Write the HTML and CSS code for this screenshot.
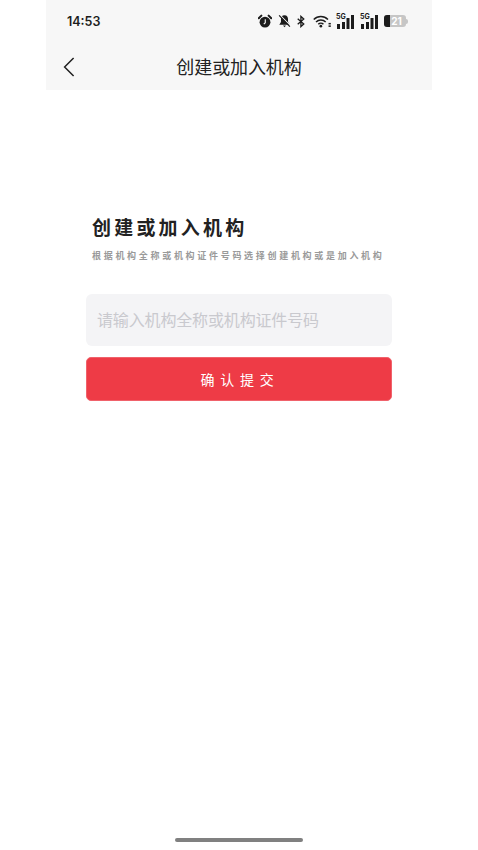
FILE: index.html
```html
<!DOCTYPE html>
<html lang="zh-CN">
<head>
    <meta charset="UTF-8">
    <meta name="viewport" content="width=device-width, initial-scale=1.0">
    <title>创建或加入机构</title>
    <link rel="stylesheet" href="styles.css">
</head>
<body>
    <div class="screen">
        <!-- Status bar + nav -->
        <header class="top">
            <div class="status-bar">
                <span class="time">14:53</span>
                <div class="status-icons">
                    <svg class="ic" width="14" height="15" viewBox="0 0 15 15">
                        <circle cx="7.5" cy="8.2" r="5.8" fill="#1c1c1c"/>
                        <path d="M0.8 4 L3.6 1.2 M14.2 4 L11.4 1.2" stroke="#1c1c1c" stroke-width="2.2" stroke-linecap="round"/>
                        <path d="M7.8 5 V8.8 L6.2 10.4" stroke="#f7f7f7" stroke-width="1.2" fill="none"/>
                    </svg>
                    <svg class="ic" width="13" height="14" viewBox="0 0 14 14">
                        <path d="M7 0.8 C4.2 0.8 3.2 3 3.2 5 V8 L1.4 11 H12.6 L10.8 8 V5 C10.8 3 9.8 0.8 7 0.8 Z" fill="#1c1c1c"/>
                        <path d="M5.4 11.8 H8.6 L7 13.6 Z" fill="#1c1c1c"/>
                        <path d="M2.2 0.6 L13.4 12" stroke="#f7f7f7" stroke-width="1.2"/>
                        <path d="M1.2 1 L12.8 13" stroke="#1c1c1c" stroke-width="1.3"/>
                    </svg>
                    <svg class="ic bt" width="8" height="13" viewBox="0 0 9 13">
                        <path d="M0.8 3.4 L7.6 9.2 L4.4 12.2 V0.8 L7.6 3.8 L0.8 9.6" stroke="#1c1c1c" stroke-width="1.5" fill="none"/>
                    </svg>
                    <svg class="ic wifi" width="18" height="13" viewBox="0 0 19 13">
                        <path d="M0.8 4.4 C5 0.2 11.6 0.2 15.8 4.4" stroke="#1c1c1c" stroke-width="1.6" fill="none"/>
                        <path d="M3.2 7 C6 4.2 10.6 4.2 13.4 7" stroke="#1c1c1c" stroke-width="1.6" fill="none"/>
                        <path d="M5.6 9.4 C7 8 9.6 8 11 9.4" stroke="#1c1c1c" stroke-width="1.6" fill="none"/>
                        <circle cx="8.3" cy="11.4" r="1.4" fill="#1c1c1c"/>
                        <rect x="16.4" y="8" width="2.4" height="1.6" fill="#1c1c1c"/>
                        <rect x="16.4" y="10.6" width="2.4" height="1.6" fill="#1c1c1c"/>
                    </svg>
                    <div class="signal">
                        <span class="sig-label">5G</span>
                        <svg width="18" height="14" viewBox="0 0 18 14">
                            <rect x="1" y="9" width="3" height="5" fill="#1c1c1c"/>
                            <rect x="6" y="7" width="3" height="7" fill="#1c1c1c"/>
                            <rect x="10.500" y="3" width="3" height="11" fill="#1c1c1c"/>
                            <rect x="15" y="0" width="3" height="14" fill="#1c1c1c"/>
                        </svg>
                    </div>
                    <div class="signal">
                        <span class="sig-label">5G</span>
                        <svg width="18" height="14" viewBox="0 0 18 14">
                            <rect x="1" y="9" width="3" height="5" fill="#1c1c1c"/>
                            <rect x="6" y="7" width="3" height="7" fill="#1c1c1c"/>
                            <rect x="10.500" y="3" width="3" height="11" fill="#1c1c1c"/>
                            <rect x="15" y="0" width="3" height="14" fill="#1c1c1c"/>
                        </svg>
                    </div>
                    <div class="battery">
                        <div class="battery-body">
                            <div class="battery-fill"></div>
                            <span class="battery-num">21</span>
                        </div>
                        <div class="battery-nub"></div>
                    </div>
                </div>
            </div>
            <nav class="navbar">
                <svg class="back" width="12" height="20" viewBox="0 0 12 20">
                    <path d="M10.6 1 L1.6 10 L10.6 19" stroke="#222" stroke-width="1.5" fill="none"/>
                </svg>
                <h1>创建或加入机构</h1>
            </nav>
        </header>

        <main class="content">
            <h2>创建或加入机构</h2>
            <p class="hint">根据机构全称或机构证件号码选择创建机构或是加入机构</p>
            <input class="org-input" type="text" placeholder="请输入机构全称或机构证件号码">
            <button class="submit-btn">确认提交</button>
        </main>

        <div class="home-bar"></div>
    </div>
</body>
</html>
```

FILE: styles.css
```css
* {
    margin: 0;
    padding: 0;
    box-sizing: border-box;
    font-family: "Inter", "Noto Sans CJK SC", sans-serif;
}

body {
    background-color: #ffffff;
    width: 478px;
    height: 850px;
    overflow: hidden;
}

.screen {
    width: 386px;
    height: 850px;
    margin-left: 46px;
    display: flex;
    flex-direction: column;
    background: #ffffff;
}

.top {
    height: 90px;
    background-color: #f7f7f7;
}

.status-bar {
    height: 42px;
    display: flex;
    align-items: center;
    justify-content: space-between;
    padding: 0 24px 0 21px;
}

.time {
    font-size: 12.5px;
    font-weight: 600;
    color: #1c1c1c;
}

.status-icons {
    display: flex;
    align-items: center;
    gap: 6px;
}

.bt {
    margin-right: 2px;
}

.wifi {
    margin-right: -1px;
}

.signal {
    position: relative;
    width: 18px;
    height: 14px;
    margin-top: 1px;
}

.signal svg {
    display: block;
}

.sig-label {
    position: absolute;
    left: 0;
    top: -2px;
    font-size: 7px;
    line-height: 7px;
    font-weight: 700;
    color: #1c1c1c;
}

.battery {
    display: flex;
    align-items: center;
    width: 24px;
}

.battery-body {
    position: relative;
    flex: 1;
    height: 12px;
    background: #c6c6c6;
    border-radius: 3px;
    overflow: hidden;
    display: flex;
    align-items: center;
    justify-content: center;
}

.battery-fill {
    position: absolute;
    left: 0;
    top: 0;
    bottom: 0;
    width: 6px;
    background: #1c1c1c;
}

.battery-nub {
    width: 2px;
    height: 5px;
    background: #c6c6c6;
    border-radius: 0 2px 2px 0;
}

.battery-num {
    position: relative;
    font-size: 10px;
    font-weight: 700;
    color: #ffffff;
    margin-left: 3px;
}

.navbar {
    position: relative;
    height: 48px;
    display: flex;
    align-items: center;
    justify-content: center;
}

.navbar h1 {
    font-size: 18px;
    font-weight: 400;
    letter-spacing: -0.1px;
    color: #222222;
    margin-top: -1px;
}

.back {
    position: absolute;
    left: 17px;
    top: 15px;
}

.content {
    flex: 1;
    padding: 126px 40px 0;
}

.content h2 {
    font-size: 19px;
    font-weight: 700;
    letter-spacing: 3.2px;
    line-height: 26px;
    color: #222222;
    margin-left: 6px;
}

.hint {
    font-size: 9px;
    font-weight: 700;
    letter-spacing: 2.7px;
    line-height: 14px;
    color: #9a9a9a;
    margin: 7px 0 0 6px;
    white-space: nowrap;
}

.org-input {
    display: block;
    width: 306px;
    height: 52px;
    margin-top: 31px;
    padding: 0 11px;
    border: none;
    outline: none;
    border-radius: 6px;
    background: #f4f4f6;
    font-size: 16px;
    letter-spacing: -0.15px;
}

.org-input::placeholder {
    color: #c9c9ce;
}

.submit-btn {
    display: block;
    width: 306px;
    height: 44px;
    margin-top: 11px;
    border: 1px solid #f0626b;
    border-radius: 5px;
    background: #ee3b46;
    color: #ffffff;
    font-size: 14px;
    letter-spacing: 5.7px;
    padding-left: 2px;
}

.home-bar {
    width: 128px;
    height: 4px;
    margin: 0 0 8px 129px;
    border-radius: 2px;
    background: #808080;
}
```
